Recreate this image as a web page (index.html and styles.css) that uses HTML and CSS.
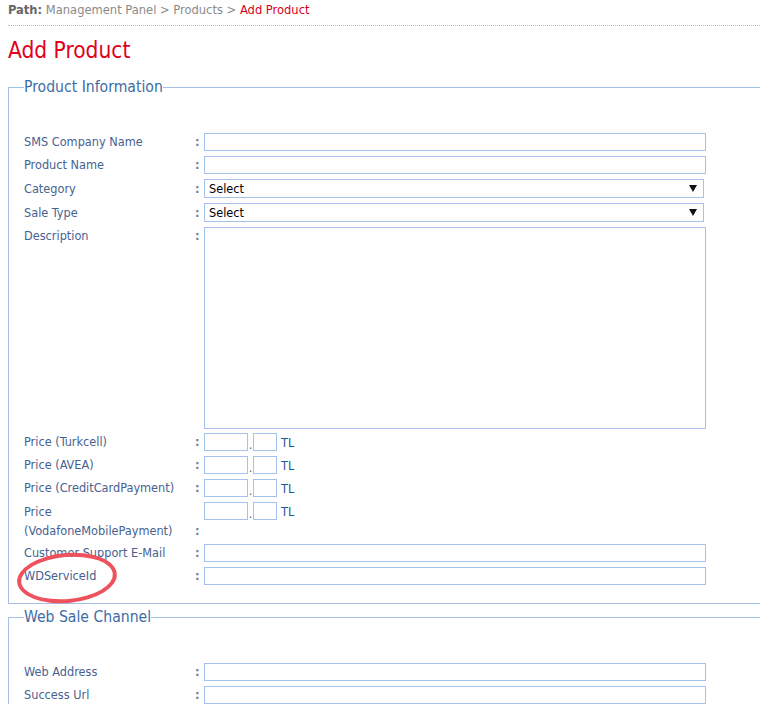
FILE: index.html
```html
<!DOCTYPE html>
<html>
<head>
<meta charset="utf-8">
<link rel="stylesheet" href="styles.css">
</head>
<body>
<div class="page">
  <div class="crumbs"><b>Path:</b> Management Panel &gt; Products &gt; <span class="cur">Add Product</span></div>
  <h1 class="title">Add Product</h1>

  <fieldset class="box">
    <legend>Product Information</legend>
    <div class="row"><span class="lbl">SMS Company Name</span><span class="col">:</span><input class="txt" type="text"></div>
    <div class="row"><span class="lbl">Product Name</span><span class="col">:</span><input class="txt" type="text"></div>
    <div class="row"><span class="lbl">Category</span><span class="col">:</span><div class="sel"><span>Select</span><i class="arr"></i></div></div>
    <div class="row"><span class="lbl">Sale Type</span><span class="col">:</span><div class="sel"><span>Select</span><i class="arr"></i></div></div>
    <div class="row top tight"><span class="lbl">Description</span><span class="col">:</span><textarea class="area"></textarea></div>
    <div class="row"><span class="lbl">Price (Turkcell)</span><span class="col">:</span><div class="price"><input class="p1"><span class="dot">.</span><input class="p2"><span class="tl">TL</span></div></div>
    <div class="row"><span class="lbl">Price (AVEA)</span><span class="col">:</span><div class="price"><input class="p1"><span class="dot">.</span><input class="p2"><span class="tl">TL</span></div></div>
    <div class="row"><span class="lbl">Price (CreditCardPayment)</span><span class="col">:</span><div class="price"><input class="p1"><span class="dot">.</span><input class="p2"><span class="tl">TL</span></div></div>
    <div class="row top tight"><span class="lbl two">Price<br>(VodafoneMobilePayment)</span><span class="col end">:</span><div class="price"><input class="p1"><span class="dot">.</span><input class="p2"><span class="tl">TL</span></div></div>
    <div class="row"><span class="lbl">Customer Support E-Mail</span><span class="col">:</span><input class="txt" type="text"></div>
    <div class="row"><span class="lbl circled">WDServiceId</span><span class="col">:</span><input class="txt" type="text"></div>
  </fieldset>

  <fieldset class="box">
    <legend>Web Sale Channel</legend>
    <div class="row"><span class="lbl">Web Address</span><span class="col">:</span><input class="txt" type="text"></div>
    <div class="row"><span class="lbl">Success Url</span><span class="col">:</span><input class="txt" type="text"></div>
  </fieldset>
</div>
</body>
</html>
```
FILE: styles.css
```css
html, body {
  overflow: hidden;
}
body {
  margin: 0;
  background: #fff;
  font-family: Tahoma, "DejaVu Sans Condensed", "DejaVu Sans", sans-serif;
  font-size: 12.6px;
  color: #47628f;
}
.page {
  padding: 2px 0 0 8px;
  width: 800px;
}
.crumbs {
  color: #8a8a8a;
  font-size: 12.8px;
  line-height: 16px;
  padding-bottom: 7px;
  border-bottom: 1px dotted #bdbdbd;
}
.crumbs b {
  color: #666;
}
.crumbs .cur {
  color: #d8001a;
}
.title {
  margin: 0;
  padding: 10px 0 0;
  font-weight: normal;
  font-size: 22.5px;
  line-height: 28px;
  color: #e0001b;
}
.box {
  margin: 13px 0 0;
  border: 1px solid #a6bfe6;
  padding: 36px 15px 18px;
  min-width: 0;
}
.box + .box {
  margin-top: 3px;
}
.box legend {
  padding: 0;
  font-size: 15.6px;
  line-height: 20px;
  color: #3d6ca6;
}
.row {
  display: grid;
  grid-template-columns: 171px 9px 1fr;
  align-items: center;
  margin-bottom: 5px;
}
.row.top {
  align-items: start;
}
.row.tight {
  margin-bottom: 4px;
}
.row:last-child {
  margin-bottom: 0;
}
.lbl {
  line-height: 18px;
  position: relative;
}
.lbl.two {
  line-height: 19px;
}
.col {
  line-height: 18px;
  font-weight: bold;
  color: #6a7fa3;
}
.col.end {
  align-self: end;
}
.txt {
  box-sizing: border-box;
  width: 502px;
  height: 18px;
  margin: 0;
  border: 1px solid #a6c2ec;
  padding: 0 3px;
  background: #fff;
}
.sel {
  box-sizing: border-box;
  width: 500px;
  height: 19px;
  border: 1px solid #a6c2ec;
  display: flex;
  align-items: center;
  justify-content: space-between;
  padding: 0 6px 0 4px;
  color: #000;
  font-size: 12.6px;
}
.arr {
  width: 0;
  height: 0;
  border-left: 4px solid transparent;
  border-right: 4px solid transparent;
  border-top: 7px solid #111;
}
.area {
  box-sizing: border-box;
  width: 502px;
  height: 202px;
  margin: 0;
  border: 1px solid #a6c2ec;
  resize: none;
  display: block;
}
.price {
  display: flex;
  align-items: center;
  height: 18px;
}
.price input {
  box-sizing: border-box;
  height: 18px;
  margin: 0;
  border: 1px solid #a6c2ec;
  padding: 0;
}
.p1 {
  width: 44px;
}
.p2 {
  width: 24px;
}
.dot {
  width: 5px;
  text-align: center;
  position: relative;
  top: 2px;
}
.tl {
  margin-left: 4px;
  color: #1e5a96;
}
.circled::after {
  content: "";
  position: absolute;
  left: -7px;
  top: -14px;
  width: 92px;
  height: 42px;
  border: 4px solid #ee525d;
  border-radius: 50%;
  transform: rotate(-5deg);
}
```
